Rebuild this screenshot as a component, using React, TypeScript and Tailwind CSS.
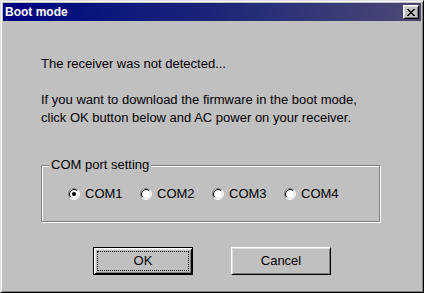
import React from "react";

const xMap = [
  "XX....XX",
  ".XX..XX.",
  "..XXXX..",
  "...XX...",
  "..XXXX..",
  ".XX..XX.",
  "XX....XX",
];

const CloseGlyph = () => (
  <svg width="8" height="7" viewBox="0 0 8 7" shapeRendering="crispEdges">
    {xMap.flatMap((row, y) =>
      row.split("").map((c, x) =>
        c === "X" ? <rect key={`${x}-${y}`} x={x} y={y} width="1" height="1" fill="#000" /> : null
      )
    )}
  </svg>
);

const Radio = ({ checked }: { checked?: boolean }) => (
  <svg width="12" height="12" viewBox="0 0 12 12" className="shrink-0">
    <circle cx="6" cy="6" r="5" fill="#fff" />
    <path d="M2.11 9.89 A5.5 5.5 0 0 1 9.89 2.11" fill="none" stroke="#808080" strokeWidth="1" />
    <path d="M9.89 2.11 A5.5 5.5 0 0 1 2.11 9.89" fill="none" stroke="#ffffff" strokeWidth="1" />
    <path d="M2.82 9.18 A4.5 4.5 0 0 1 9.18 2.82" fill="none" stroke="#000" strokeWidth="1" />
    <path d="M9.18 2.82 A4.5 4.5 0 0 1 2.82 9.18" fill="none" stroke="#dfdfdf" strokeWidth="1" />
    {checked && <circle cx="6" cy="6" r="2" fill="#000" />}
  </svg>
);

const ports = ["COM1", "COM2", "COM3", "COM4"];

export default function App() {
  return (
    <div className="w-[424px] h-[293px] bg-[#c0c0c0] border border-t-[#dfdfdf] border-l-[#dfdfdf] border-b-black border-r-black shadow-[inset_1px_1px_#fff,inset_-1px_-1px_#808080] p-[2px] flex flex-col font-['Liberation_Sans',Arial,sans-serif] text-[13px] text-black">
      {/* Title bar */}
      <div className="h-[18px] shrink-0 flex items-center justify-between pl-[2px] pr-[2px] bg-gradient-to-r from-[#000080] via-[#1c2478] to-[#4e4874]">
        <span className="text-white font-bold text-[12px] leading-none">Boot mode</span>
        <button className="w-[16px] h-[14px] flex items-center justify-center bg-[#c0c0c0] border border-t-white border-l-white border-b-black border-r-black shadow-[inset_1px_1px_#dfdfdf,inset_-1px_-1px_#808080]">
          <CloseGlyph />
        </button>
      </div>

      {/* Body */}
      <div className="flex flex-col pt-[34px] pl-[38px] leading-[18px]">
        <p>The receiver was not detected...</p>
        <p className="mt-[18px]">
          If you want to download the firmware in the boot mode,
          <br />
          click OK button below and AC power on your receiver.
        </p>

        <div className="relative mt-[38px] w-[339px] h-[57px] border border-[#808080] shadow-[inset_1px_1px_#fff,1px_1px_#fff] flex items-center pl-[26px]">
          <span className="absolute left-[7px] top-[-10px] px-[2px] bg-[#c0c0c0] leading-[18px]">
            COM port setting
          </span>
          {ports.map((p, i) => (
            <label key={p} className="w-[72px] flex items-center gap-[5px] mt-[1px]">
              <Radio checked={i === 0} />
              <span>{p}</span>
            </label>
          ))}
        </div>
      </div>

      <div className="flex justify-center gap-[38px] mt-[25px]">
        <button className="relative w-[100px] h-[28px] border border-black shadow-[inset_1px_1px_#fff,inset_-1px_-1px_#000,inset_2px_2px_#dfdfdf,inset_-2px_-2px_#808080] bg-[#c0c0c0] flex items-center justify-center">
          <span className="absolute inset-[3px] border border-dotted border-black" />
          OK
        </button>
        <button className="w-[100px] h-[28px] border border-t-white border-l-white border-b-black border-r-black shadow-[inset_1px_1px_#dfdfdf,inset_-1px_-1px_#808080] bg-[#c0c0c0] flex items-center justify-center">
          Cancel
        </button>
      </div>
    </div>
  );
}
